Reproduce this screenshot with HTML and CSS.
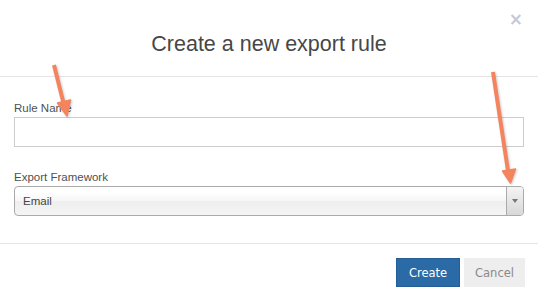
FILE: index.html
```html
<!DOCTYPE html>
<html lang="en">
<head>
    <meta charset="UTF-8">
    <title>Create a new export rule</title>
    <link rel="stylesheet" href="styles.css">
</head>
<body>
    <div class="modal">
        <div class="modal-header">
            <span class="close">&times;</span>
            <h3 class="modal-title">Create a new export rule</h3>
        </div>

        <div class="modal-body">
            <label class="field-label">Rule Name</label>
            <input type="text" class="text-input">

            <label class="field-label second">Export Framework</label>
            <div class="select-box">
                <span class="select-value">Email</span>
                <span class="select-arrow"><b></b></span>
            </div>
        </div>

        <div class="modal-footer">
            <button class="btn btn-primary">Create</button>
            <button class="btn btn-default">Cancel</button>
        </div>

        <!-- annotation arrows drawn over the dialog -->
        <svg class="annotations" width="538" height="302" viewBox="0 0 538 302">
            <g fill="#f3845e" stroke="#f3845e" stroke-linejoin="round">
                <line x1="54" y1="65" x2="63.5" y2="103" stroke-width="4"/>
                <polygon points="57.5,103 70.5,100 67,116" stroke-width="1.5"/>
                <line x1="493" y1="72" x2="508" y2="171" stroke-width="4"/>
                <polygon points="502.5,171 515.5,169 510.5,183" stroke-width="1.5"/>
            </g>
        </svg>
    </div>
</body>
</html>
```

FILE: styles.css
```css
body {
    margin: 0;
    background-color: #fff;
    font-family: "Liberation Sans", Arial, sans-serif;
    color: #555;
}

.modal {
    position: relative;
    width: 538px;
    height: 302px;
    overflow: hidden;
}

.modal-header {
    position: relative;
    height: 76px;
    border-bottom: 1px solid #e5e5e5;
    text-align: center;
}

.modal-title {
    margin: 0;
    padding-top: 32px;
    font-size: 21.5px;
    line-height: 24px;
    font-weight: normal;
    color: #474747;
}

.close {
    position: absolute;
    top: 9px;
    right: 15px;
    font-family: "DejaVu Sans", sans-serif;
    font-size: 17px;
    line-height: 20px;
    font-weight: bold;
    color: #cbc6d3;
}

.modal-body {
    display: flex;
    flex-direction: column;
    padding: 24px 14px 27px;
    border-bottom: 1px solid #e5e5e5;
}

.field-label {
    display: block;
    margin-bottom: 1px;
    font-size: 11.5px;
    line-height: 15px;
    color: #505050;
}

.field-label.second {
    margin-top: 23px;
}

.text-input {
    box-sizing: border-box;
    width: 100%;
    height: 30px;
    margin: 0;
    padding: 4px 8px;
    border: 1px solid #ccc;
    border-radius: 0;
    background-color: #fff;
}

.select-box {
    display: flex;
    box-sizing: border-box;
    height: 30px;
    border: 1px solid #aaa;
    border-radius: 4px;
    background: linear-gradient(#fff 20%, #f6f6f6 50%, #eee 52%, #f4f4f4 100%);
    overflow: hidden;
}

.select-value {
    flex: 1;
    padding-left: 8px;
    font-size: 11.5px;
    line-height: 28px;
    color: #444;
}

.select-arrow {
    display: flex;
    align-items: center;
    justify-content: center;
    width: 16px;
    border-left: 1px solid #aaa;
    background: linear-gradient(#f4f4f4, #d8d8d8);
}

.select-arrow b {
    width: 0;
    height: 0;
    border-left: 3px solid transparent;
    border-right: 3px solid transparent;
    border-top: 4px solid #777;
}

.modal-footer {
    display: flex;
    justify-content: flex-end;
    gap: 4px;
    padding: 14px 13px 0 0;
}

.btn {
    box-sizing: border-box;
    height: 29px;
    margin: 0;
    padding: 0;
    border: 1px solid transparent;
    border-radius: 0;
    font-family: "DejaVu Sans", sans-serif;
    font-size: 11.5px;
    cursor: pointer;
}

.btn-primary {
    width: 64px;
    background-color: #2a6aa6;
    border-color: #235d93;
    color: #fff;
}

.btn-default {
    width: 61px;
    background-color: #eee;
    color: #8a8a8a;
}

.annotations {
    position: absolute;
    top: 0;
    left: 0;
    pointer-events: none;
    filter: drop-shadow(1px 1px 1px rgba(0, 0, 0, 0.2));
}
```
